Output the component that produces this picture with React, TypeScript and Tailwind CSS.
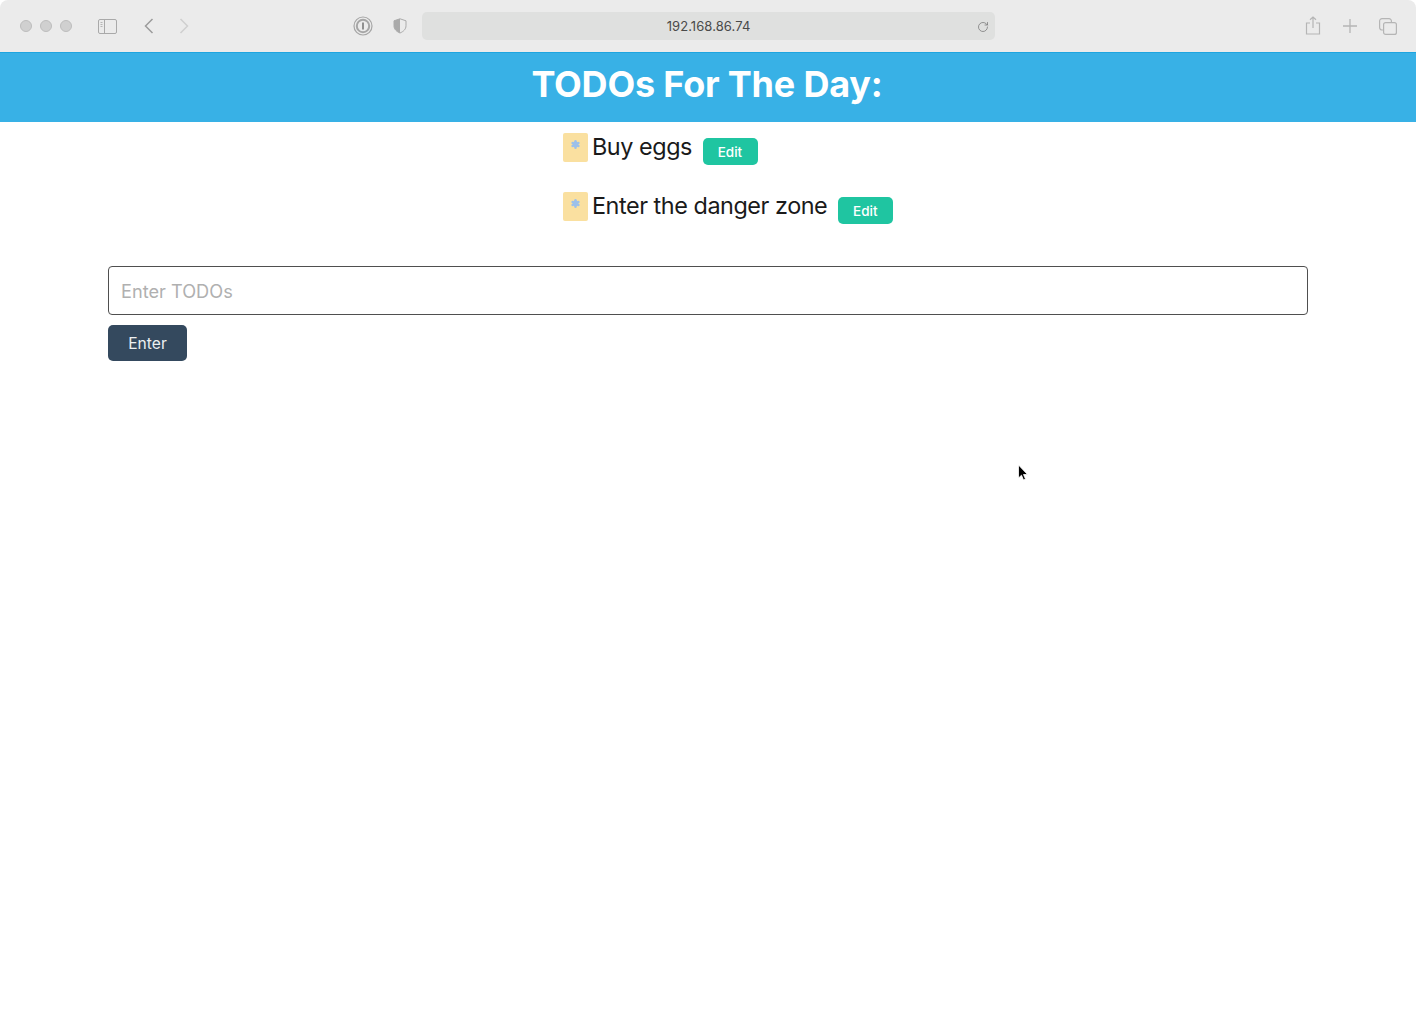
import { RotateCw } from 'lucide-react';

const font = { fontFamily: 'Inter, sans-serif' };

function BrowserBar() {
  return (
    <div className="h-[53px] bg-[#ebebeb] rounded-t-[8px] border-b border-[#1ea5e0] flex items-center relative shrink-0">
      <div className="flex items-center gap-[8px] ml-[20px]">
        <span className="w-[12px] h-[12px] rounded-full bg-[#d0d0d0] border border-[#bdbdbd]" />
        <span className="w-[12px] h-[12px] rounded-full bg-[#d0d0d0] border border-[#bdbdbd]" />
        <span className="w-[12px] h-[12px] rounded-full bg-[#d0d0d0] border border-[#bdbdbd]" />
      </div>
      {/* sidebar toggle */}
      <svg className="ml-[26px]" width="19" height="15" viewBox="0 0 19 15" fill="none">
        <rect x="0.5" y="0.5" width="18" height="14" rx="1.5" stroke="#a9a9a9" />
        <path d="M6.5 1v13" stroke="#a9a9a9" />
        <path d="M2.5 3.5h2M2.5 5.5h2M2.5 7.5h2" stroke="#b5b5b5" />
      </svg>
      {/* back / forward */}
      <svg className="ml-[27px]" width="10" height="16" viewBox="0 0 10 16" fill="none">
        <path d="M8.5 1L1.5 8l7 7" stroke="#9b9b9b" strokeWidth="1.5" />
      </svg>
      <svg className="ml-[25px]" width="10" height="16" viewBox="0 0 10 16" fill="none">
        <path d="M1.5 1l7 7-7 7" stroke="#cfcfcf" strokeWidth="1.5" />
      </svg>
      {/* 1password */}
      <svg className="ml-[164px]" width="20" height="20" viewBox="0 0 20 20" fill="none">
        <circle cx="10" cy="10" r="9" stroke="#a6a6a6" strokeWidth="1.2" />
        <circle cx="10" cy="10" r="6.2" stroke="#a6a6a6" strokeWidth="2" />
        <path d="M10 6.5v7" stroke="#8f8f8f" strokeWidth="2" />
      </svg>
      {/* shield */}
      <svg className="ml-[20px]" width="14" height="16" viewBox="0 0 14 16" fill="none">
        <path d="M7 .8l6 2v5c0 3.4-2.6 5.8-6 7.2-3.4-1.4-6-3.8-6-7.2v-5z" stroke="#aaa" />
        <path d="M7 .8l-6 2v5c0 3.4 2.6 5.8 6 7.2z" fill="#aaa" />
      </svg>
      {/* address bar */}
      <div className="ml-[15px] w-[573px] h-[28px] rounded-[5px] bg-[#dfe0df] flex items-center justify-center relative">
        <span className="text-[13px] text-[#4a4a4a] tracking-[0.08px] pt-[1px]">192.168.86.74</span>
        <RotateCw className="absolute right-[6px] top-[9px] text-[#777]" size={12} strokeWidth={1.5} />
      </div>
      <div className="ml-auto mr-[19px] flex items-center gap-[22px]">
        {/* share */}
        <svg className="-mt-[2px]" width="16" height="19" viewBox="0 0 16 19" fill="none">
          <path d="M5 7H1.5v11h13V7H11" stroke="#b5b5b5" strokeWidth="1.2" />
          <path d="M8 12V1M5 3.8L8 1l3 2.8" stroke="#b5b5b5" strokeWidth="1.2" />
        </svg>
        {/* plus */}
        <svg width="14" height="14" viewBox="0 0 14 14" fill="none">
          <path d="M7 0v14M0 7h14" stroke="#b5b5b5" strokeWidth="1.3" />
        </svg>
        {/* tabs */}
        <svg width="18" height="17" viewBox="0 0 18 17" fill="none">
          <rect x="4.6" y="4.6" width="12.8" height="11.8" rx="2" stroke="#b5b5b5" strokeWidth="1.2" />
          <path d="M4.6 12H3a2.4 2.4 0 0 1-2.4-2.4V3A2.4 2.4 0 0 1 3 .6h7A2.4 2.4 0 0 1 12.400 3v1.600" stroke="#b5b5b5" strokeWidth="1.2" />
        </svg>
      </div>
    </div>
  );
}

function TodoRow({ label }: { label: string }) {
  return (
    <li className="flex items-start h-[29px] mb-[30px]">
      <span className="w-[25px] h-[29px] rounded-[2px] bg-[#fae0a0] flex justify-center pt-[7px] pr-[1px] shrink-0">
        <svg width="9" height="9" viewBox="0 0 10 10" fill="#9cc0ea">
          <circle cx="5" cy="5" r="3.2" />
          <circle cx="5" cy="1.500" r="1.400" />
          <circle cx="5" cy="8.500" r="1.400" />
          <circle cx="1.800" cy="3.300" r="1.400" />
          <circle cx="8.200" cy="3.300" r="1.400" />
          <circle cx="1.800" cy="6.700" r="1.400" />
          <circle cx="8.200" cy="6.700" r="1.400" />
        </svg>
      </span>
      <span className="ml-[4px] text-[23.4px] leading-[27px] tracking-[-0.45px] text-[#1a1a1a] whitespace-nowrap">{label}</span>
      <button className="ml-[11px] mt-[5px] w-[55px] h-[27px] rounded-[5px] bg-[#1fc5a1] text-white text-[13.5px] font-medium pt-[1px] pr-[1px]">
        Edit
      </button>
    </li>
  );
}

export default function App() {
  return (
    <div className="h-[1025px] bg-white overflow-hidden flex flex-col relative" style={font}>
      <BrowserBar />
      <header className="h-[69px] bg-[#38b1e6] flex items-center justify-center shrink-0 pb-[8px]">
        <h1 className="text-[36px] font-bold tracking-[-0.2px] text-white -ml-[2px]">TODOs For The Day:</h1>
      </header>
      <ul className="pl-[563px] pt-[11px]">
        <TodoRow label="Buy eggs" />
        <TodoRow label="Enter the danger zone" />
      </ul>
      <div className="px-[108px] w-[1416px] mt-[15px]">
        <input
          placeholder="Enter TODOs"
          className="block w-full h-[49px] rounded-[4px] border border-[#4f4f4f] px-[12px] text-[18.2px] placeholder:text-[#b0b0b0] outline-none"
        />
        <button className="mt-[10px] w-[79px] h-[36px] rounded-[5px] bg-[#34495e] text-[#ecf0f1] text-[15.6px] pt-[1px]">
          Enter
        </button>
      </div>
      {/* mouse cursor */}
      <svg className="absolute left-[1017px] top-[464px]" width="12" height="18" viewBox="0 0 12 18">
        <path d="M1.500 1v13l3-2.800 2 4.800 2-.9-2-4.600h4z" fill="#000" stroke="#fff" strokeWidth="0.8" />
      </svg>
    </div>
  );
}
